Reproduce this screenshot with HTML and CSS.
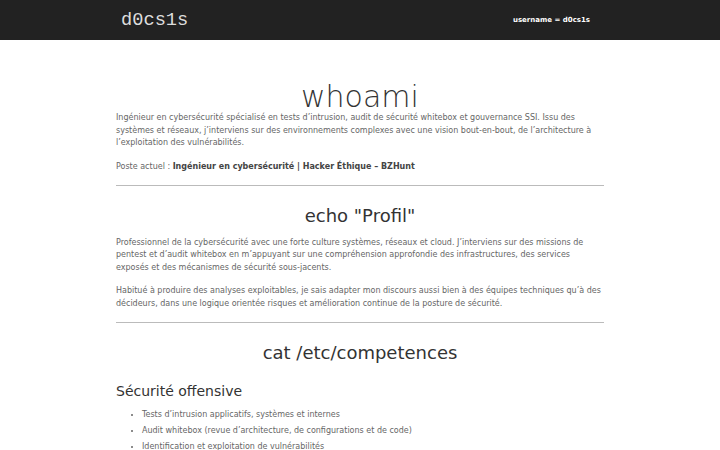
FILE: index.html
```html
<!DOCTYPE html>
<html lang="fr">
<head>
<meta charset="utf-8">
<title>d0cs1s</title>
<link rel="stylesheet" href="styles.css">
</head>
<body>
<header class="topbar">
  <div class="topbar-inner">
    <div class="logo">d0cs1s</div>
    <div class="user">username = d0cs1s</div>
  </div>
</header>
<main class="content">
  <section class="section">
    <h1 class="title">whoami</h1>
    <p class="text">Ingénieur en cybersécurité spécialisé en tests d’intrusion, audit de sécurité whitebox et gouvernance SSI. Issu des systèmes et réseaux, j’interviens sur des environnements complexes avec une vision bout-en-bout, de l’architecture à l’exploitation des vulnérabilités.</p>
    <p class="text">Poste actuel : <strong>Ingénieur en cybersécurité | Hacker Éthique – BZHunt</strong></p>
  </section>
  <hr class="sep">
  <section class="section">
    <h2 class="heading heading-profil">echo "Profil"</h2>
    <p class="text">Professionnel de la cybersécurité avec une forte culture systèmes, réseaux et cloud. J’interviens sur des missions de pentest et d’audit whitebox en m’appuyant sur une compréhension approfondie des infrastructures, des services exposés et des mécanismes de sécurité sous-jacents.</p>
    <p class="text">Habitué à produire des analyses exploitables, je sais adapter mon discours aussi bien à des équipes techniques qu’à des décideurs, dans une logique orientée risques et amélioration continue de la posture de sécurité.</p>
  </section>
  <hr class="sep">
  <section class="section">
    <h2 class="heading heading-skills">cat /etc/competences</h2>
    <h3 class="subheading">Sécurité offensive</h3>
    <ul class="list">
      <li>Tests d’intrusion applicatifs, systèmes et internes</li>
      <li>Audit whitebox (revue d’architecture, de configurations et de code)</li>
      <li>Identification et exploitation de vulnérabilités</li>
    </ul>
  </section>
</main>
</body>
</html>
```

FILE: styles.css
```css
html, body {
  margin: 0;
  padding: 0;
  background: #ffffff;
}
body {
  font-family: "DejaVu Sans", sans-serif;
  color: #666666;
}
.topbar {
  background: #222222;
  height: 40px;
}
.topbar-inner {
  width: 488px;
  margin: 0 auto;
  height: 40px;
  display: flex;
  align-items: center;
  justify-content: space-between;
  padding: 0 14px 0 5px;
  box-sizing: border-box;
}
.logo {
  font-family: "Liberation Mono", monospace;
  font-size: 18.7px;
  color: #dddddd;
}
.user {
  font-size: 7px;
  font-weight: bold;
  color: #ffffff;
}
.content {
  width: 488px;
  margin: 0 auto;
}
.title {
  font-size: 30px;
  font-weight: 200;
  text-align: center;
  color: #333333;
  line-height: 1;
  margin: 42px 0 0;
}
.text {
  font-size: 8px;
  line-height: 12.5px;
  margin: 0 0 11px;
}
.text strong {
  color: #444444;
}
.sep {
  border: 0;
  border-top: 1px solid #bbbbbb;
  margin: 12px 0 0;
}
.heading {
  font-size: 18px;
  font-weight: normal;
  color: #333333;
  text-align: center;
  margin: 19px 0 10px;
  line-height: 1.2;
}
.heading-skills {
  margin-top: 19px;
}
.subheading {
  font-size: 14px;
  font-weight: normal;
  color: #333333;
  margin: 19px 0 8px;
}
.list {
  margin: 0;
  padding-left: 26px;
  font-size: 8px;
}
.list li {
  line-height: 16px;
}
```
